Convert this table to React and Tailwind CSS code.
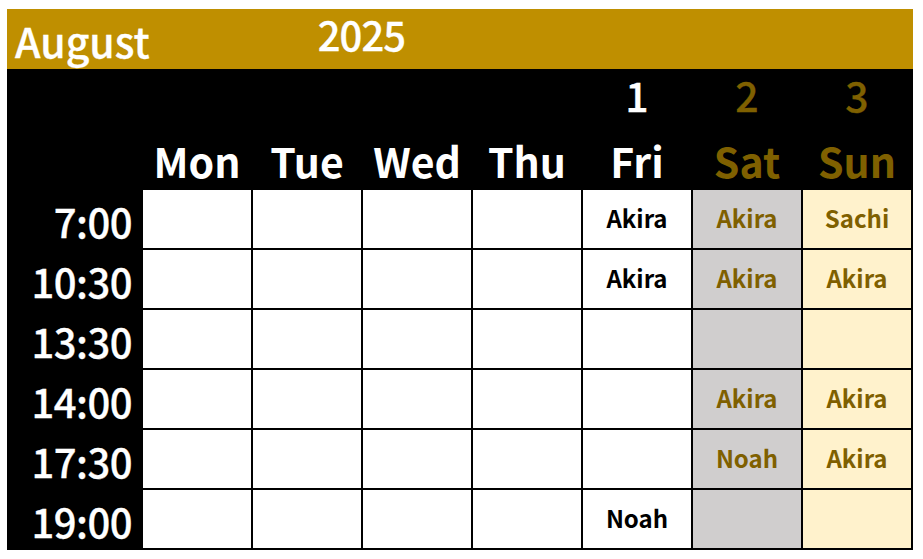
const days = [
  { name: 'Mon', date: '' },
  { name: 'Tue', date: '' },
  { name: 'Wed', date: '' },
  { name: 'Thu', date: '' },
  { name: 'Fri', date: '1' },
  { name: 'Sat', date: '2' },
  { name: 'Sun', date: '3' },
];

const schedule = [
  { time: '7:00', shifts: ['', '', '', '', 'Akira', 'Akira', 'Sachi'] },
  { time: '10:30', shifts: ['', '', '', '', 'Akira', 'Akira', 'Akira'] },
  { time: '13:30', shifts: ['', '', '', '', '', '', ''] },
  { time: '14:00', shifts: ['', '', '', '', '', 'Akira', 'Akira'] },
  { time: '17:30', shifts: ['', '', '', '', '', 'Noah', 'Akira'] },
  { time: '19:00', shifts: ['', '', '', '', 'Noah', '', ''] },
];

const cellColor = (i) => {
  if (i === 5) return 'bg-[#D0CECE] text-[#7F6000]';
  if (i === 6) return 'bg-[#FFF2CC] text-[#7F6000]';
  return 'bg-white text-black';
};

const headColor = (i) => (i >= 5 ? 'text-[#7F6000]' : 'text-white');

export default function App() {
  return (
    <div
      className="min-h-screen bg-white pt-[9px] pl-[7px]"
      style={{ fontFamily: '"Noto Sans CJK JP", "Noto Sans", sans-serif' }}
    >
      <div className="w-[906px]">
        {/* Month header */}
        <div className="h-[60px] bg-[#BF8F00] flex text-white font-medium [-webkit-text-stroke:0.3px_white]">
          <div className="pl-[8px] pt-[9px] text-[41px] leading-[44px]">August</div>
          <div className="ml-[168px] pt-[4px] text-[40px] leading-[42px] tracking-[-1px]">2025</div>
        </div>

        {/* Calendar grid */}
        <div className="bg-black grid grid-cols-[134px_repeat(7,108px)] grid-rows-[59px_58px_repeat(6,58px)] gap-[2px] pr-[2px] pb-[2px]">
          <div />
          {days.map((d, i) => (
            <div
              key={'date' + i}
              className={`flex items-center justify-center pb-[8px] text-[41px] font-medium [-webkit-text-stroke:0.3px_currentColor] ${headColor(i)}`}
            >
              {d.date}
            </div>
          ))}

          <div />
          {days.map((d, i) => (
            <div
              key={'day' + i}
              className={`flex items-center justify-center pt-[4px] text-[41px] font-bold ${headColor(i)}`}
            >
              {d.name}
            </div>
          ))}

          {schedule.map((row) => (
            <>
              <div
                key={row.time}
                className="flex items-center justify-end pr-[9px] pt-[4px] text-[40px] tracking-[-0.5px] font-medium text-white [-webkit-text-stroke:0.3px_white]"
              >
                {row.time}
              </div>
              {row.shifts.map((s, i) => (
                <div
                  key={row.time + i}
                  className={`flex items-center justify-center pb-[2px] text-[24px] font-bold ${cellColor(i)}`}
                >
                  {s}
                </div>
              ))}
            </>
          ))}
        </div>
      </div>
    </div>
  );
}
